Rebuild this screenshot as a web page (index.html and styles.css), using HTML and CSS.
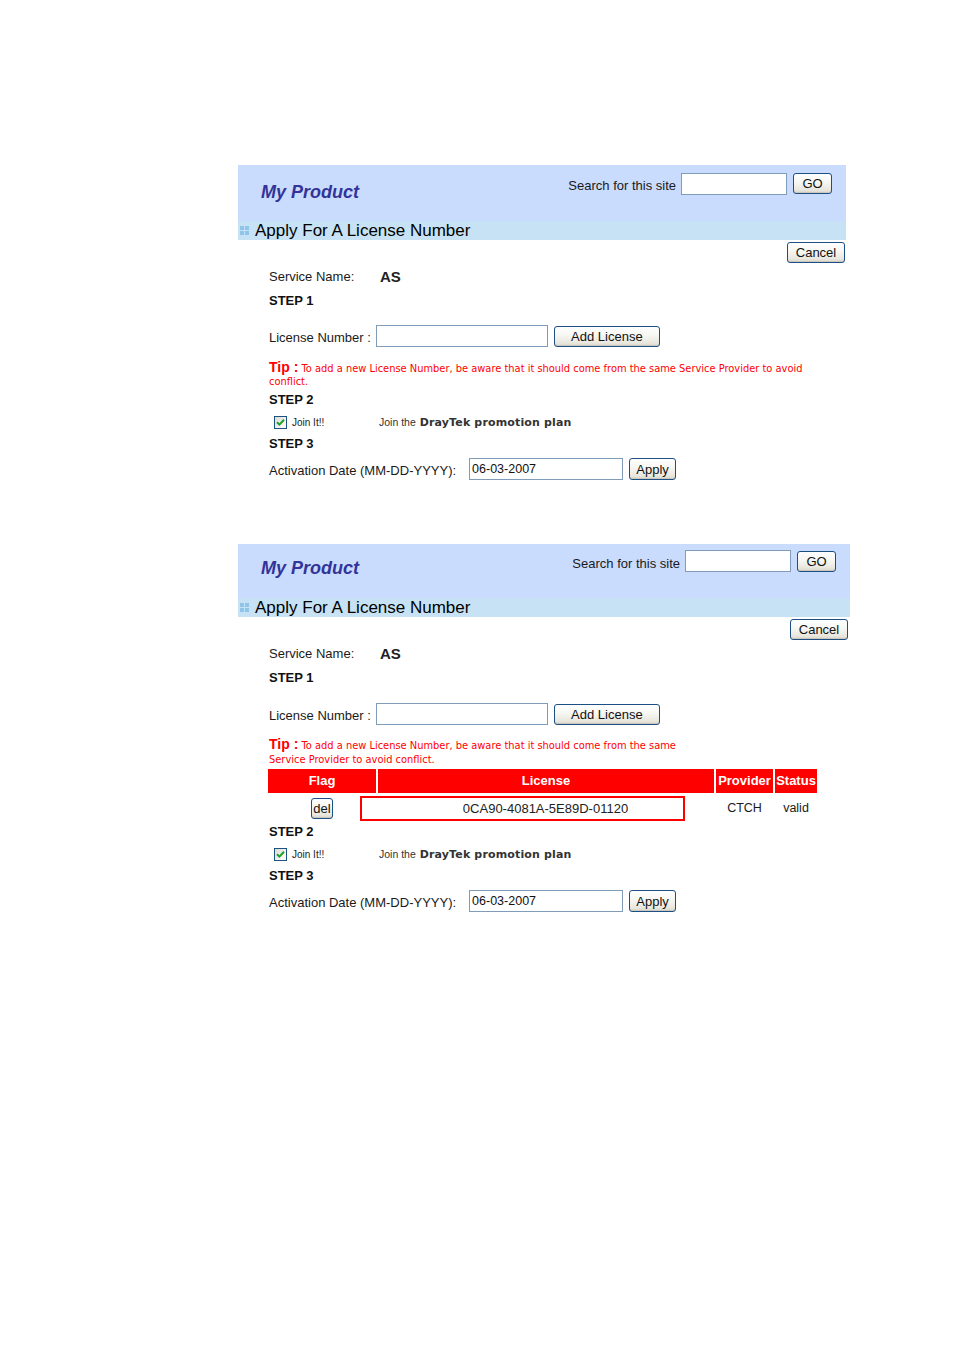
FILE: index.html
```html
<!DOCTYPE html>
<html>
<head>
<meta charset="utf-8">
<title>My Product - Apply For A License Number</title>
<link rel="stylesheet" href="styles.css">
</head>
<body>
<div class="page">
  <section class="panel p1">
    <div class="head">
      <div class="brand">My Product</div>
      <div class="search">
        <span class="search-lbl">Search for this site</span>
        <input class="field sfield" type="text">
        <button class="btn go">GO</button>
      </div>
    </div>
    <div class="bar">
      <svg class="bar-ic" width="10" height="10" viewBox="0 0 10 10"><rect x="0" y="0" width="4" height="4" fill="#8ec5ea"/><rect x="5" y="0" width="4" height="4" fill="#8ec5ea"/><rect x="0" y="5" width="4" height="4" fill="#8ec5ea"/><rect x="5" y="5" width="4" height="4" fill="#8ec5ea"/></svg>
      <span>Apply For A License Number</span>
    </div>
    <div class="body">
      <div class="cancel-row"><button class="btn cancel">Cancel</button></div>
      <div class="svc-row"><span class="svc-lbl">Service Name:</span><span class="svc">AS</span></div>
      <div class="step">STEP 1</div>
      <div class="lic-row">
        <span class="lbl">License Number :</span>
        <input class="field licf" type="text">
        <button class="btn add">Add License</button>
      </div>
      <p class="tip tip1"><b>Tip :</b> To add a new License Number, be aware that it should come from the same Service Provider to avoid conflict.</p>
      <div class="step step2">STEP 2</div>
      <div class="join">
        <span class="join-cell"><span class="cb"><svg width="9" height="9" viewBox="0 0 9 9"><path d="M1 4.2 L3.4 6.6 L8 1.8" fill="none" stroke="#21a121" stroke-width="2"/></svg></span><span class="join-it">Join It!!</span></span>
        <span class="join-the">Join the <b>DrayTek promotion plan</b></span>
      </div>
      <div class="step">STEP 3</div>
      <div class="act">
        <span class="lbl">Activation Date (MM-DD-YYYY):</span>
        <input class="field actf" type="text" value="06-03-2007">
        <button class="btn apply">Apply</button>
      </div>
    </div>
  </section>

  <section class="panel p2">
    <div class="head">
      <div class="brand">My Product</div>
      <div class="search">
        <span class="search-lbl">Search for this site</span>
        <input class="field sfield" type="text">
        <button class="btn go">GO</button>
      </div>
    </div>
    <div class="bar">
      <svg class="bar-ic" width="10" height="10" viewBox="0 0 10 10"><rect x="0" y="0" width="4" height="4" fill="#8ec5ea"/><rect x="5" y="0" width="4" height="4" fill="#8ec5ea"/><rect x="0" y="5" width="4" height="4" fill="#8ec5ea"/><rect x="5" y="5" width="4" height="4" fill="#8ec5ea"/></svg>
      <span>Apply For A License Number</span>
    </div>
    <div class="body">
      <div class="cancel-row"><button class="btn cancel">Cancel</button></div>
      <div class="svc-row"><span class="svc-lbl">Service Name:</span><span class="svc">AS</span></div>
      <div class="step">STEP 1</div>
      <div class="lic-row">
        <span class="lbl">License Number :</span>
        <input class="field licf" type="text">
        <button class="btn add">Add License</button>
      </div>
      <p class="tip tip2"><b>Tip :</b> To add a new License Number, be aware that it should come from the same Service Provider to avoid conflict.</p>
      <div class="lt-head">
        <div class="th c-flag">Flag</div>
        <div class="th c-lic">License</div>
        <div class="th c-prov">Provider</div>
        <div class="th c-stat">Status</div>
      </div>
      <div class="lt-row">
        <div class="td-flag"><button class="btn del">del</button></div>
        <div class="td-lic">0CA90-4081A-5E89D-01120</div>
        <div class="td-prov">CTCH</div>
        <div class="td-stat">valid</div>
      </div>
      <div class="step">STEP 2</div>
      <div class="join">
        <span class="join-cell"><span class="cb"><svg width="9" height="9" viewBox="0 0 9 9"><path d="M1 4.2 L3.4 6.6 L8 1.8" fill="none" stroke="#21a121" stroke-width="2"/></svg></span><span class="join-it">Join It!!</span></span>
        <span class="join-the">Join the <b>DrayTek promotion plan</b></span>
      </div>
      <div class="step">STEP 3</div>
      <div class="act">
        <span class="lbl">Activation Date (MM-DD-YYYY):</span>
        <input class="field actf" type="text" value="06-03-2007">
        <button class="btn apply">Apply</button>
      </div>
    </div>
  </section>
</div>
</body>
</html>
```

FILE: styles.css
```css
* { box-sizing: border-box; }
html, body { margin: 0; padding: 0; background: #fff; }
body { font-family: "Liberation Sans", Arial, sans-serif; font-size: 13px; color: #1a1a1a; }

.page { padding: 165px 0 0 238px; }

.panel { display: flex; flex-direction: column; }
.p1 { width: 608px; }
.p2 { width: 612px; margin-top: 63px; }

.head {
  background: #c9dcfd;
  display: flex;
  justify-content: space-between;
  align-items: flex-start;
  height: 56px;
  padding: 0 14px 0 23px;
}
.p2 .head { height: 54px; }
.brand {
  font: italic bold 18px/22px "Liberation Sans", Arial, sans-serif;
  color: #333399;
  padding-top: 16px;
}
.p2 .brand { padding-top: 13px; }
.search { display: flex; align-items: center; padding-top: 7px; height: 30px; }
.p2 .search { padding-top: 4px; }
.search-lbl { margin-right: 5px; position: relative; top: 2px; }

.field {
  height: 22px;
  border: 1px solid #7f9db9;
  background: #fff;
  font: 12.5px "Liberation Sans", Arial, sans-serif;
  color: #111;
  padding: 0 2px;
  margin: 0;
}
.sfield { width: 106px; }
.licf { width: 172px; margin-left: 5px; }
.actf { width: 154px; margin-left: 13px; }

.btn {
  font: 13px "Liberation Sans", Arial, sans-serif;
  color: #111;
  height: 21px;
  padding: 0;
  margin: 0;
  border: 1px solid #1c4f86;
  border-radius: 3px;
  background: linear-gradient(#ffffff 0%, #f6f6f2 45%, #e8e6dd 85%, #d8d3c6 100%);
  box-shadow: inset 0 -1px 0 #cdc8bb;
}
.go { width: 39px; margin-left: 6px; }
.cancel { width: 58px; }
.add { width: 106px; margin-left: 6px; }
.apply { width: 47px; margin-left: 6px; height: 22px; }
.del { width: 22px; }

.bar {
  background: #c6e2f4;
  height: 19px;
  display: flex;
  align-items: center;
  padding-left: 2px;
  font-size: 17px;
  line-height: 19px;
  color: #000;
}
.bar-ic { margin-right: 5px; }

.body { padding-left: 31px; }

.cancel-row {
  height: 23px;
  padding-top: 2px;
  padding-right: 1px;
  display: flex;
  justify-content: flex-end;
}
.p2 .cancel-row { padding-right: 2px; }

.svc-row { height: 28px; line-height: 28px; display: flex; }
.svc-lbl { width: 111px; }
.svc { font-weight: bold; font-size: 15px; color: #222; }

.step { height: 20px; line-height: 20px; font-weight: bold; color: #111; }

.lic-row { margin-top: 13px; height: 24px; display: flex; align-items: center; }
.p2 .lic-row { margin-top: 14px; }
.lbl { position: relative; top: 1px; }

.tip {
  margin: 14px 0 0 0;
  color: #ff0000;
  font: 9.9px/13px "DejaVu Sans", Verdana, sans-serif;
}
.tip b { font: bold 14px/10px "Liberation Sans", Arial, sans-serif; }
.tip1 { width: 545px; }
.tip2 { width: 420px; margin-top: 13px; line-height: 14px; }

.step2 { margin-top: 2px; }
.p2 .step2 { margin-top: 0; }

.join { height: 24px; display: flex; align-items: center; }
.join-cell { width: 110px; display: flex; align-items: center; }
.cb {
  width: 13px; height: 13px;
  margin-left: 5px;
  border: 1px solid #1c5180;
  background: linear-gradient(135deg, #dcdcd6, #fff);
  display: flex; align-items: center; justify-content: center;
}
.join-it { font-size: 10px; margin-left: 5px; color: #222; }
.join-the { font-size: 10.5px; color: #333; }
.join-the b { font: bold 11px "DejaVu Sans", Verdana, sans-serif; letter-spacing: 0.15px; margin-left: 1px; }

.act { margin-top: 3px; height: 24px; display: flex; align-items: center; }

.lt-head {
  margin: 2px 0 0 -1px;
  display: flex;
  gap: 2px;
  height: 24px;
}
.th {
  background: #ff0000;
  color: #fff;
  font-weight: bold;
  text-align: center;
  line-height: 24px;
}
.c-flag { width: 108px; }
.c-lic { width: 336px; }
.c-prov { width: 57px; }
.c-stat { width: 42px; }

.lt-row {
  margin: 1px 0 0 -1px;
  height: 28px;
  display: flex;
  align-items: center;
  font-size: 12.5px;
}
.td-flag { width: 92px; padding-left: 43px; display: flex; }
.td-lic {
  width: 325px;
  height: 25px;
  border: 2px solid #ff0000;
  padding-left: 46px;
  text-align: center;
  line-height: 21px;
  font-size: 13px;
  color: #222;
}
.td-prov { width: 57px; margin-left: 31px; text-align: center; }
.td-stat { width: 42px; margin-left: 2px; text-align: center; }
```
